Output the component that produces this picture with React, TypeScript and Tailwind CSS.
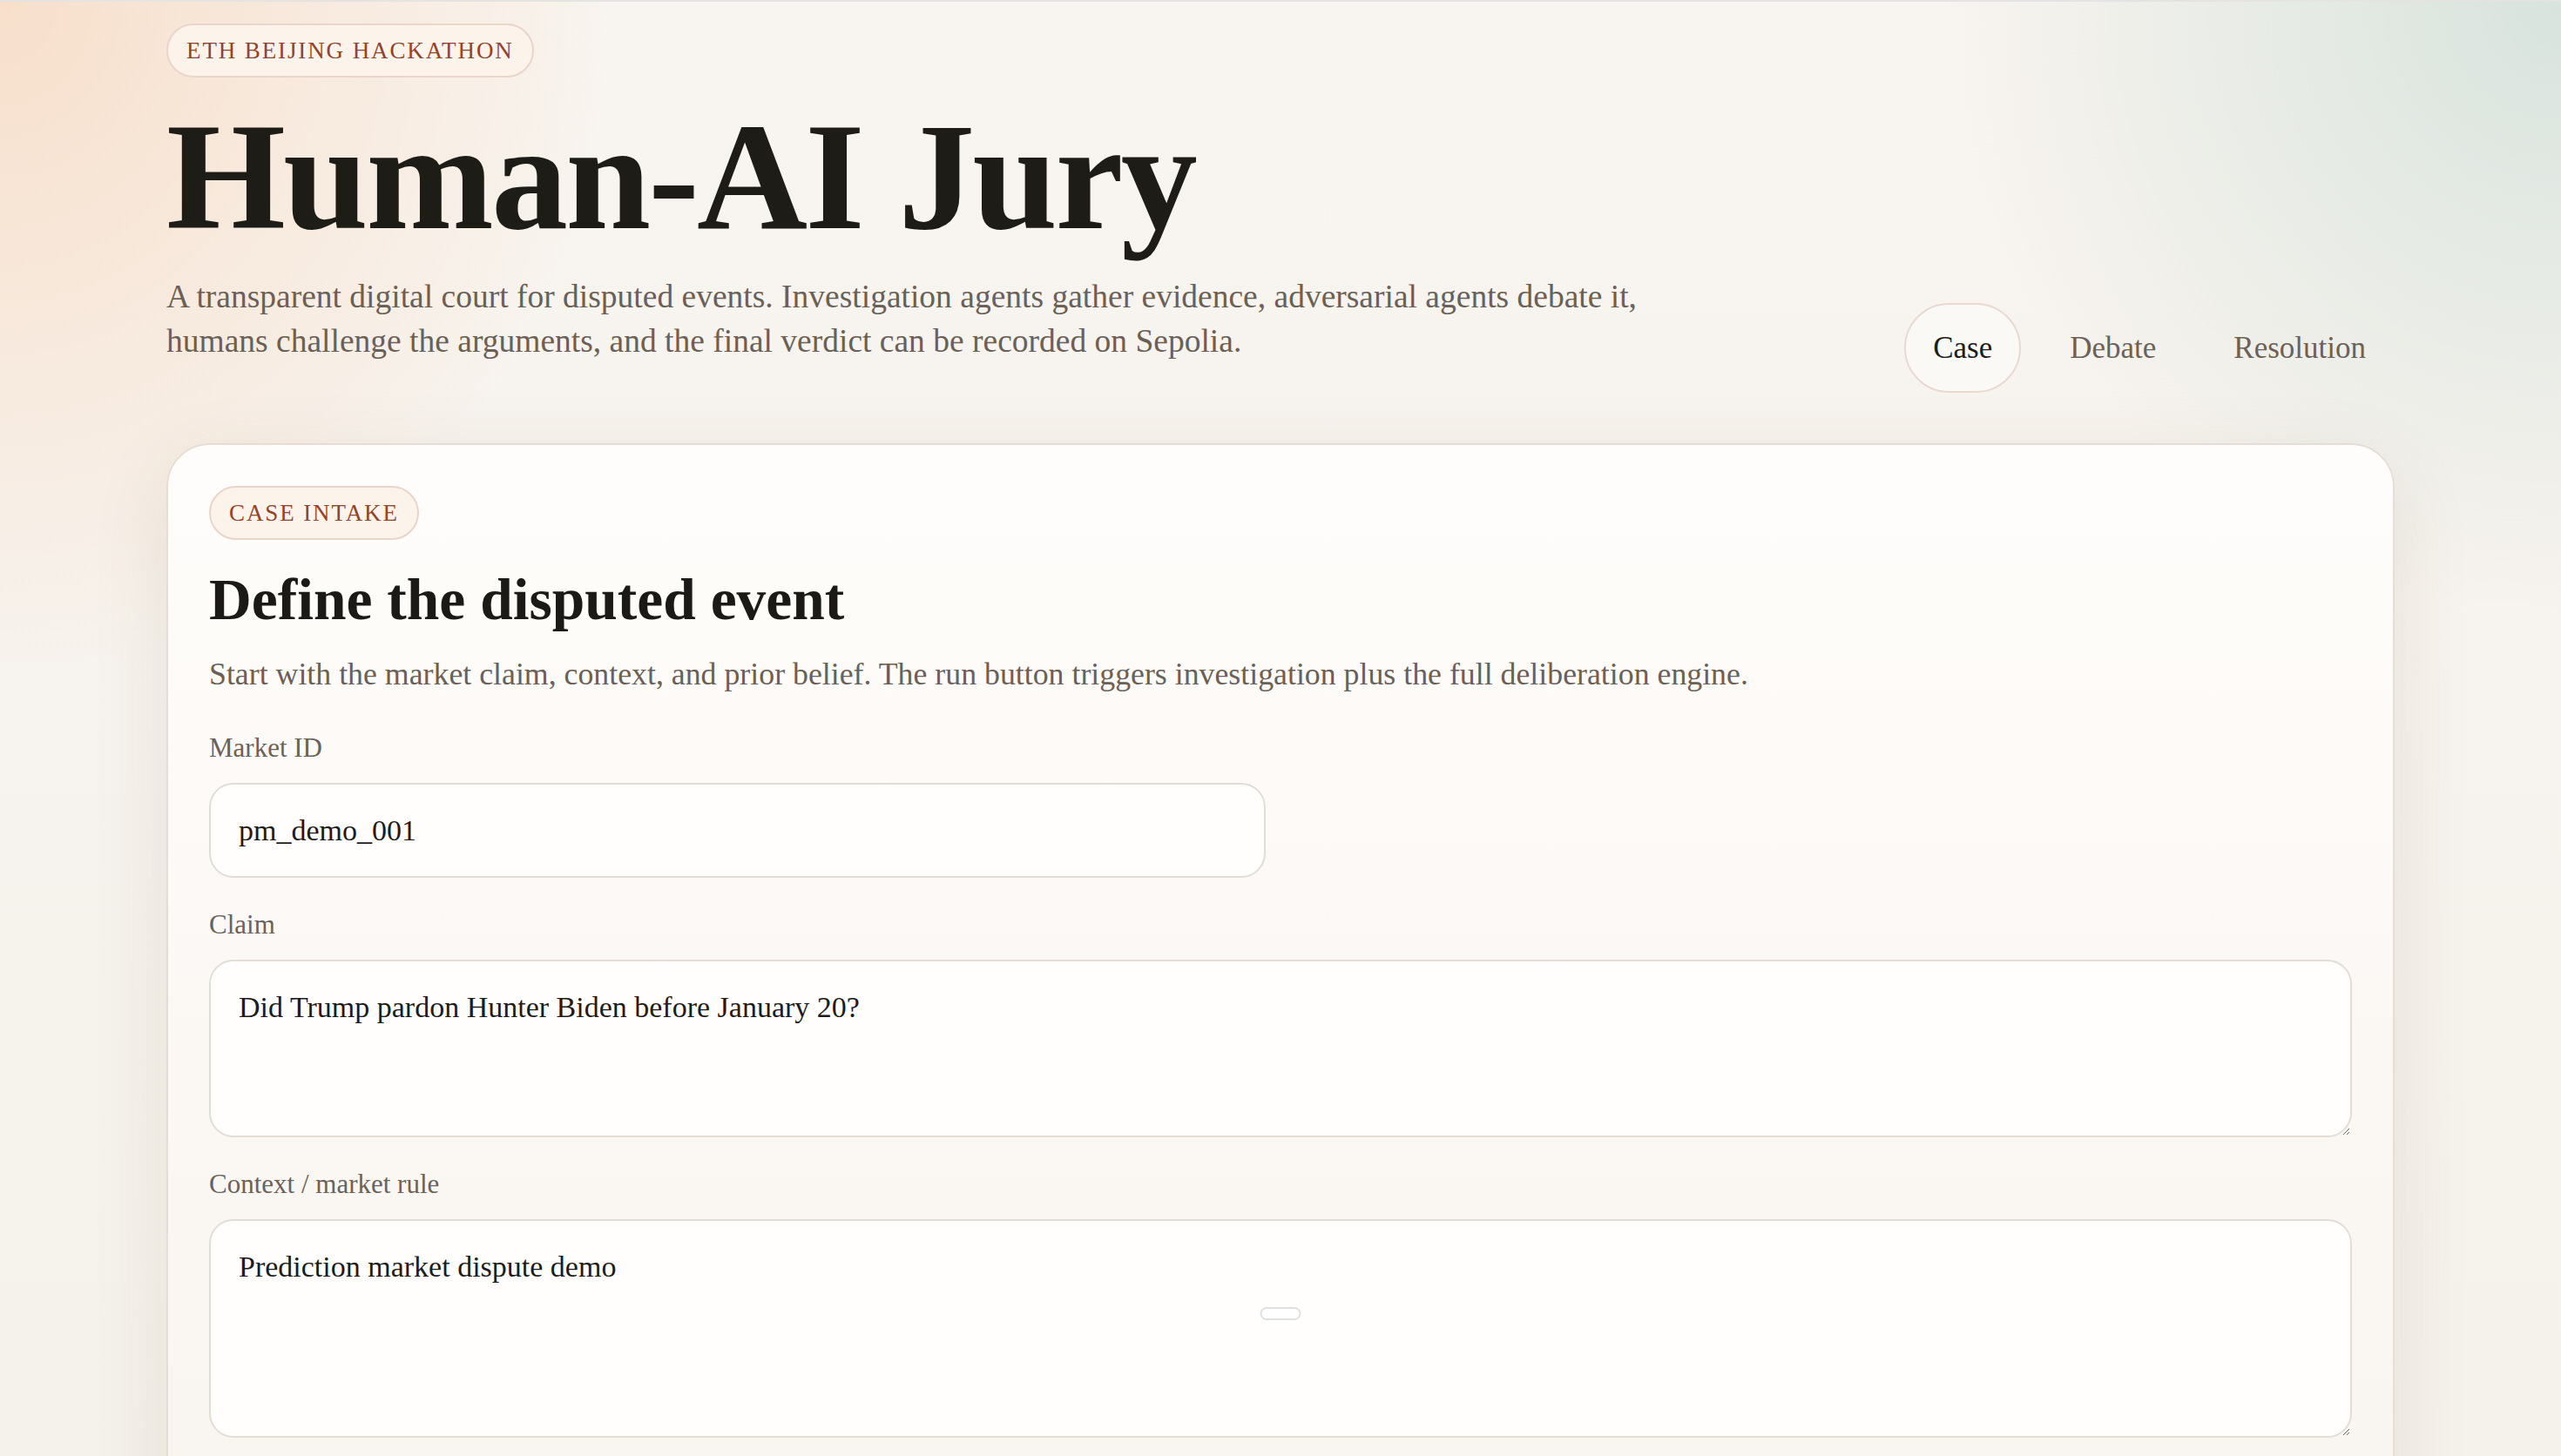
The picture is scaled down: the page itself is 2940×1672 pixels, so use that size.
import type { ReactNode } from 'react'

const tabs = ['Case', 'Debate', 'Resolution']

export default function App() {
  return (
    <div className="h-screen overflow-hidden border-t-2 border-[#e4e3e1] bg-[#f6f2ec] bg-[radial-gradient(ellipse_1000px_1100px_at_0%_0%,rgba(247,222,201,0.95),rgba(247,222,201,0)_70%),radial-gradient(ellipse_1000px_1000px_at_100%_0%,rgba(216,227,221,1),rgba(216,227,221,0)_70%),linear-gradient(180deg,#f8f4ef,#f5f1eb)] font-['Liberation_Serif',serif] text-[#1e1c17]">
      <div className="mx-auto w-full max-w-[2558px] pt-[25px]">
        <Header />
        <CaseCard />
      </div>
    </div>
  )
}

function Header() {
  return (
    <header className="flex items-end justify-between">
      <div className="pb-[34px]">
        <Badge>ETH Beijing Hackathon</Badge>

        <h1 className="mt-[26px] text-[176px] font-bold leading-none tracking-[-0.016em] text-[#1e1c17]">
          Human-AI Jury
        </h1>

        <p className="mt-[24px] max-w-[1760px] text-[37.5px] leading-[51px] text-[#6b6056]">
          A transparent digital court for disputed events. Investigation agents gather evidence,
          adversarial agents debate it, humans challenge the arguments, and the final verdict can be
          recorded on Sepolia.
        </p>
      </div>

      <nav className="flex items-center gap-[23px]">
        {tabs.map((tab, i) => (
          <button
            key={tab}
            type="button"
            className={
              i === 0
                ? 'rounded-full border-2 border-[#ead9d1] bg-[#fbf9f6] px-[31px] py-[24px] text-[35px] leading-[51px] text-[#1f1b17]'
                : 'rounded-full border-2 border-transparent px-[31px] py-[24px] text-[35px] leading-[51px] text-[#6b6158]'
            }
          >
            {tab}
          </button>
        ))}
      </nav>
    </header>
  )
}

function Badge({ children }: { children: ReactNode }) {
  return (
    <span className="inline-flex rounded-full border-2 border-[#e9d5ca] bg-[#fcf3eb] px-[21px] py-[12px] text-[27px] uppercase leading-[34px] tracking-[0.07em] text-[#93432a]">
      {children}
    </span>
  )
}

function CaseCard() {
  return (
    <section className="mt-[58px] min-h-[1400px] rounded-[50px] border-2 border-[#e6ded5] bg-gradient-to-b from-[#fffdfb] via-[#fbf8f4] to-[#f8f4ee] p-[47px] shadow-[0_24px_90px_rgba(90,64,40,0.10)]">
      <Badge>Case Intake</Badge>

      <h2 className="mt-[33px] text-[67.5px] font-bold leading-[72px] text-[#1c1a16]">
        Define the disputed event
      </h2>

      <p className="mt-[24px] text-[35.8px] leading-[50px] text-[#6a6057]">
        Start with the market claim, context, and prior belief. The run button triggers investigation
        plus the full deliberation engine.
      </p>

      <div className="mt-[40px] grid grid-cols-2 gap-x-[34px] gap-y-[34px]">
        <Field label="Market ID">
          <input
            defaultValue="pm_demo_001"
            className="w-full rounded-[28px] border-2 border-[#e3ddd6] bg-[#fffefd] px-[32px] py-[27px] text-[34px] leading-[51px] text-[#1e1b18] outline-none"
          />
        </Field>

        <div />

        <Field label="Claim" wide>
          <textarea
            defaultValue="Did Trump pardon Hunter Biden before January 20?"
            className="block h-[204px] w-full rounded-[28px] border-2 border-[#e3ddd6] bg-[#fffefd] px-[32px] py-[27px] text-[34px] leading-[51px] text-[#1e1b18] outline-none"
          />
        </Field>

        <Field label="Context / market rule" wide>
          <div className="relative">
            <textarea
              defaultValue="Prediction market dispute demo"
              className="block h-[251px] w-full rounded-[28px] border-2 border-[#e3ddd6] bg-[#fffefd] px-[32px] py-[27px] text-[34px] leading-[51px] text-[#1e1b18] outline-none"
            />
            <span className="pointer-events-none absolute left-1/2 top-[101px] h-[15px] w-[47px] -translate-x-1/2 rounded-full border-2 border-[#e0e0e0] bg-white" />
          </div>
        </Field>
      </div>
    </section>
  )
}

function Field({ label, wide, children }: { label: string; wide?: boolean; children: ReactNode }) {
  return (
    <label className={wide ? 'col-span-2 block' : 'block'}>
      <span className="block text-[31px] leading-[40px] text-[#6b6158]">{label}</span>
      <div className="mt-[20px]">{children}</div>
    </label>
  )
}
